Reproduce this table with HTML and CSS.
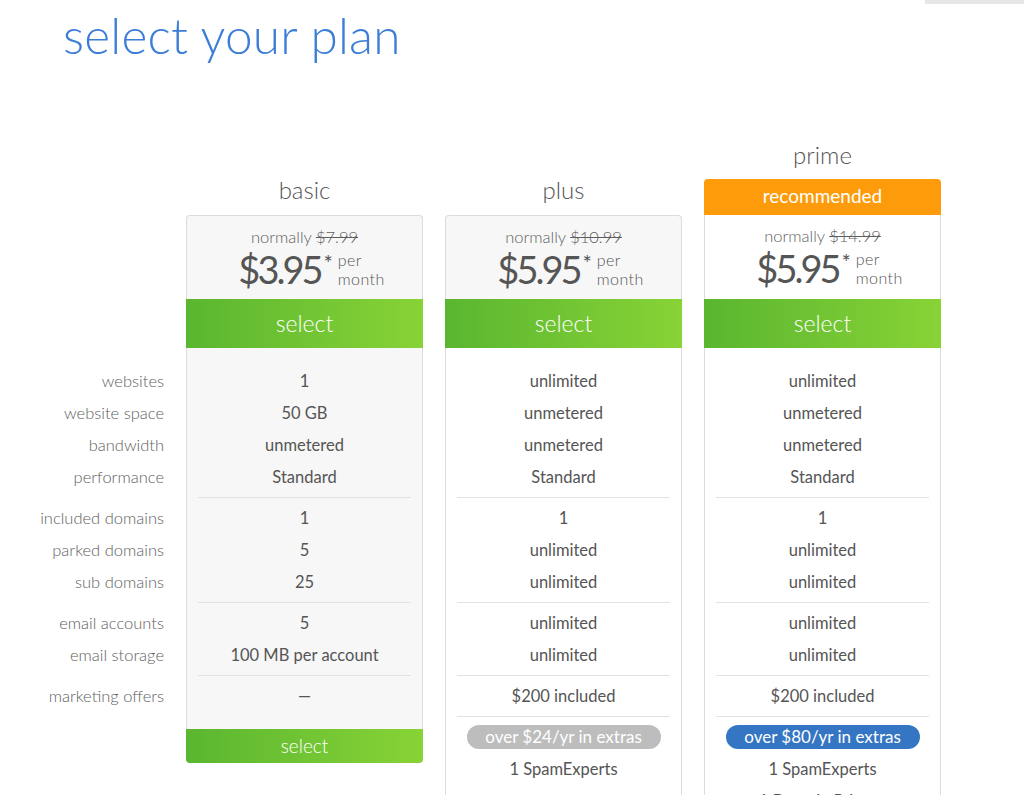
FILE: index.html
```html
<!DOCTYPE html>
<html lang="en">
<head>
<meta charset="utf-8">
<title>select your plan</title>
<link rel="stylesheet" href="styles.css">
</head>
<body>
<header class="top">
  <h1 class="title">select your plan</h1>
  <div class="topbar"></div>
</header>

<main class="plans">
  <div class="labels">
    <div class="group">
      <div class="row">websites</div>
      <div class="row">website space</div>
      <div class="row">bandwidth</div>
      <div class="row">performance</div>
    </div>
    <div class="sep blank"></div>
    <div class="group">
      <div class="row">included domains</div>
      <div class="row">parked domains</div>
      <div class="row">sub domains</div>
    </div>
    <div class="sep blank"></div>
    <div class="group">
      <div class="row">email accounts</div>
      <div class="row">email storage</div>
    </div>
    <div class="sep blank"></div>
    <div class="group">
      <div class="row">marketing offers</div>
    </div>
  </div>

  <section class="plan basic">
    <div class="plan-top">
      <h2 class="plan-name">basic</h2>
    </div>
    <div class="price-box">
      <div class="normally">normally <s>$7.99</s></div>
      <div class="price"><span class="amount">$3.95</span><span class="star">*</span><span class="per"><span>per</span><span>month</span></span></div>
    </div>
    <button class="select">select</button>
    <div class="body">
      <div class="group">
        <div class="row">1</div>
        <div class="row">50 GB</div>
        <div class="row">unmetered</div>
        <div class="row">Standard</div>
      </div>
      <div class="sep"></div>
      <div class="group">
        <div class="row">1</div>
        <div class="row">5</div>
        <div class="row">25</div>
      </div>
      <div class="sep"></div>
      <div class="group">
        <div class="row">5</div>
        <div class="row">100 MB per account</div>
      </div>
      <div class="sep"></div>
      <div class="group">
        <div class="row">—</div>
      </div>
    </div>
    <button class="select select-bottom">select</button>
  </section>

  <section class="plan plus">
    <div class="plan-top">
      <h2 class="plan-name">plus</h2>
    </div>
    <div class="price-box">
      <div class="normally">normally <s>$10.99</s></div>
      <div class="price"><span class="amount">$5.95</span><span class="star">*</span><span class="per"><span>per</span><span>month</span></span></div>
    </div>
    <button class="select">select</button>
    <div class="body">
      <div class="group">
        <div class="row">unlimited</div>
        <div class="row">unmetered</div>
        <div class="row">unmetered</div>
        <div class="row">Standard</div>
      </div>
      <div class="sep"></div>
      <div class="group">
        <div class="row">1</div>
        <div class="row">unlimited</div>
        <div class="row">unlimited</div>
      </div>
      <div class="sep"></div>
      <div class="group">
        <div class="row">unlimited</div>
        <div class="row">unlimited</div>
      </div>
      <div class="sep"></div>
      <div class="group">
        <div class="row">$200 included</div>
      </div>
      <div class="sep"></div>
      <div class="group">
        <div class="row"><span class="pill pill-gray">over $24/yr in extras</span></div>
        <div class="row">1 SpamExperts</div>
        <div class="row"></div>
        <div class="row"></div>
      </div>
    </div>
  </section>

  <section class="plan prime">
    <div class="plan-top">
      <h2 class="plan-name">prime</h2>
      <div class="badge">recommended</div>
    </div>
    <div class="price-box">
      <div class="normally">normally <s>$14.99</s></div>
      <div class="price"><span class="amount">$5.95</span><span class="star">*</span><span class="per"><span>per</span><span>month</span></span></div>
    </div>
    <button class="select">select</button>
    <div class="body">
      <div class="group">
        <div class="row">unlimited</div>
        <div class="row">unmetered</div>
        <div class="row">unmetered</div>
        <div class="row">Standard</div>
      </div>
      <div class="sep"></div>
      <div class="group">
        <div class="row">1</div>
        <div class="row">unlimited</div>
        <div class="row">unlimited</div>
      </div>
      <div class="sep"></div>
      <div class="group">
        <div class="row">unlimited</div>
        <div class="row">unlimited</div>
      </div>
      <div class="sep"></div>
      <div class="group">
        <div class="row">$200 included</div>
      </div>
      <div class="sep"></div>
      <div class="group">
        <div class="row"><span class="pill pill-blue">over $80/yr in extras</span></div>
        <div class="row">1 SpamExperts</div>
        <div class="row">1 Domain Privacy</div>
        <div class="row"></div>
      </div>
    </div>
  </section>
</main>
</body>
</html>
```

FILE: styles.css
```css
html, body {
  margin: 0;
  padding: 0;
  background: #fff;
}

body {
  font-family: Lato, "Open Sans", "Liberation Sans", sans-serif;
  color: #555;
  overflow: hidden;
  height: 795px;
}

.top {
  display: flex;
  align-items: flex-start;
}

.title {
  margin: 5px 0 0 63px;
  font-size: 49.5px;
  line-height: 60px;
  font-weight: 300;
  color: #3c7dd7;
  letter-spacing: 0.2px;
}

.topbar {
  margin-left: auto;
  width: 99px;
  height: 4px;
  background: #e6e6e6;
}

.plans {
  display: grid;
  grid-template-columns: 164px 237px 237px 237px;
  column-gap: 22px;
  align-items: start;
  margin-top: 65px;
}

.labels {
  padding-top: 235px;
  text-align: right;
  font-weight: 300;
  color: #5e5e5e;
}

.row {
  height: 32px;
  line-height: 32px;
  font-size: 16.5px;
  white-space: nowrap;
}

.sep {
  height: 1px;
  margin: 4px 11px;
  background: #e2e2e2;
}

.sep.blank {
  background: transparent;
}

.plan {
  display: flex;
  flex-direction: column;
  text-align: center;
}

.plan-top {
  height: 85px;
  display: flex;
  flex-direction: column;
  justify-content: flex-end;
}

.plan-name {
  margin: 0 0 10px;
  font-size: 24px;
  line-height: 30px;
  font-weight: 300;
  color: #555;
}

.prime .plan-name {
  margin-bottom: 9px;
}

.badge {
  height: 36px;
  line-height: 34px;
  background: #fd9b0b;
  color: #fff;
  font-size: 19px;
  font-weight: 400;
  border-radius: 4px 4px 0 0;
}

.price-box {
  height: 83px;
  border: 1px solid #dcdcdc;
  border-bottom: none;
  border-radius: 4px 4px 0 0;
  background: #f7f7f7;
  display: flex;
  flex-direction: column;
  align-items: center;
}

.prime .price-box {
  border-top: none;
  border-radius: 0;
  background: #fff;
  height: 84px;
}

.normally {
  margin-top: 11px;
  font-size: 16.5px;
  line-height: 20px;
  font-weight: 300;
  color: #5e5e5e;
}

.normally s {
  text-decoration-thickness: 1px;
}

.price {
  display: flex;
  align-items: flex-start;
  padding-left: 14px;
}

.amount {
  font-size: 38px;
  line-height: 44px;
  font-weight: 400;
  color: #555;
  letter-spacing: -3px;
  padding-right: 3px;
}

.star {
  font-size: 22px;
  line-height: 22px;
  margin-top: 5px;
  color: #555;
}

.per {
  display: flex;
  flex-direction: column;
  margin-left: 5px;
  margin-top: 3px;
  font-size: 16px;
  line-height: 19px;
  letter-spacing: 0.4px;
  font-weight: 300;
  text-align: left;
  color: #555;
}

.select {
  display: block;
  width: 100%;
  height: 49px;
  border: none;
  margin: 0;
  padding: 0;
  background: linear-gradient(to right, #5ab630, #88d336);
  color: #fff;
  font-family: inherit;
  font-size: 23px;
  font-weight: 300;
  line-height: 49px;
  cursor: pointer;
}

.select-bottom {
  height: 34px;
  line-height: 32px;
  font-size: 19px;
  border-radius: 0 0 4px 4px;
}

.body {
  border-left: 1px solid #dcdcdc;
  border-right: 1px solid #dcdcdc;
  padding-top: 17px;
  padding-bottom: 17px;
  background: #fff;
}

.basic .body {
  background: #f7f7f7;
}

.pill {
  display: inline-block;
  width: 194px;
  height: 24px;
  line-height: 24px;
  margin-top: 4px;
  border-radius: 12px;
  color: #fff;
  font-size: 17px;
  vertical-align: top;
}

.pill-gray {
  background: #bdbdbd;
}

.pill-blue {
  background: #3576c4;
}
```
